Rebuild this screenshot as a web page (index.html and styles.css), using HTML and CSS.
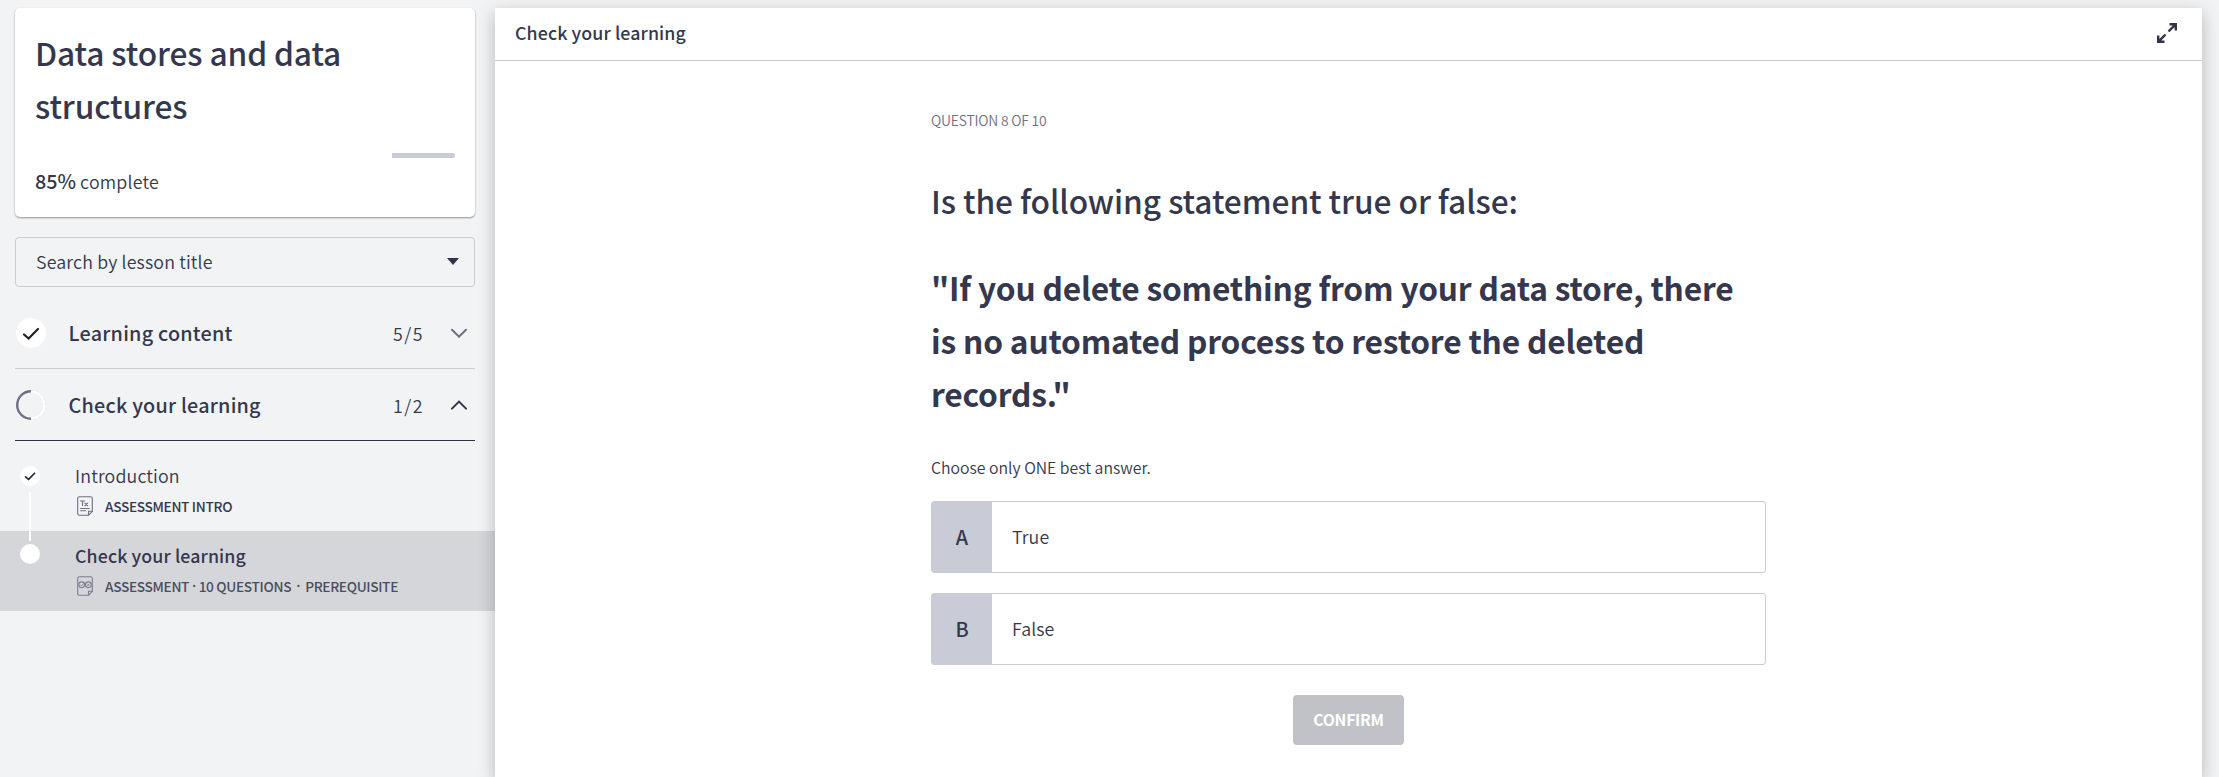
FILE: index.html
```html
<!DOCTYPE html>
<html lang="en">
<head>
<meta charset="utf-8">
<title>Data stores and data structures</title>
<link rel="stylesheet" href="styles.css">
</head>
<body>
<div class="app">
  <aside class="sidebar">
    <section class="course-card">
      <h1 class="course-title">Data stores and data structures</h1>
      <div class="progress"><div class="progress-rest"></div></div>
      <p class="complete"><strong class="percent">85%</strong> <span class="complete-label">complete</span></p>
    </section>
    <div class="search">
      <span class="search-label">Search by lesson title</span>
      <svg class="caret" width="12" height="7" viewBox="0 0 12 7"><path d="M0 0H12L6 7Z" fill="#313449"/></svg>
    </div>
    <div class="group">
      <svg class="status" width="30" height="30" viewBox="0 0 30 30"><circle cx="15" cy="15" r="15" fill="#fff"/><path d="M8 16.5L12.6 20.6L22 11" fill="none" stroke="#222" stroke-width="2.2" stroke-linecap="round"/></svg>
      <h2 class="group-title">Learning content</h2>
      <span class="count">5/5</span>
      <svg class="chevron" width="16" height="10" viewBox="0 0 16 10"><path d="M1 1.7L8 8.7L15 1.7" fill="none" stroke="#6e7083" stroke-width="2" stroke-linecap="round"/></svg>
    </div>
    <div class="group open">
      <svg class="status" width="30" height="30" viewBox="0 0 30 30"><path d="M15 .5A14.5 14.5 0 0 1 15 29.5" fill="none" stroke="#d9dbe0" stroke-width="1" stroke-dasharray="3 2"/><path d="M15 1.5A13.5 13.5 0 0 1 15 28.5" fill="none" stroke="#fff" stroke-width="2"/><path d="M15 1.2A13.8 13.8 0 0 0 15 28.8" fill="none" stroke="#6e7083" stroke-width="2.4"/></svg>
      <h2 class="group-title">Check your learning</h2>
      <span class="count">1/2</span>
      <svg class="chevron" width="16" height="10" viewBox="0 0 16 10"><path d="M1 8.6L8 1.6L15 8.6" fill="none" stroke="#313449" stroke-width="2" stroke-linecap="round"/></svg>
    </div>
    <ul class="lessons">
      <li class="lesson">
        <svg class="bullet" width="20" height="20" viewBox="0 0 20 20"><circle cx="10" cy="10" r="10" fill="#fff"/><path d="M5.6 10.8L8.6 13.4L14.6 7.2" fill="none" stroke="#222" stroke-width="1.6" stroke-linecap="round"/></svg>
        <div class="lesson-body">
          <h3 class="lesson-title">Introduction</h3>
          <div class="meta">
            <svg class="doc" width="16" height="20" viewBox="0 0 16 20" fill="none" stroke="#6e7083" stroke-width="1.1"><path d="M2.5 .7H13.5Q15.3 .7 15.3 2.5V15.5L11.5 19.3H2.5Q.7 19.3 .7 17.5V2.5Q.7 .7 2.5 .7Z"/><path d="M15.3 15.3H11.5V19.3M3.2 12.5H12.6M3.2 14.8H9M3 5H8M5.5 5V10M7.6 6.8L10.8 10M10.8 6.8L7.6 10"/></svg>
            <span class="meta-text">ASSESSMENT INTRO</span>
          </div>
        </div>
        <span class="connector"></span>
      </li>
      <li class="lesson current">
        <svg class="bullet" width="20" height="20" viewBox="0 0 20 20"><circle cx="10" cy="10" r="10" fill="#fff"/></svg>
        <div class="lesson-body">
          <h3 class="lesson-title">Check your learning</h3>
          <div class="meta">
            <svg class="doc" width="16" height="20" viewBox="0 0 16 20" fill="none" stroke="#7b7d8e" stroke-width="1.1"><path d="M2.5 .7H13.5Q15.3 .7 15.3 2.5V15.5L11.5 19.3H2.5Q.7 19.3 .7 17.5V2.5Q.7 .7 2.5 .7Z"/><path d="M15.3 15.3H11.5V19.3"/><circle cx="4.7" cy="8.8" r="2.9"/><circle cx="11.3" cy="8.8" r="2.9"/><path d="M3.3 8.8L4.4 9.9L6.8 7.3M10.2 7.7L12.4 9.9M12.4 7.7L10.2 9.9" stroke-width=".9"/></svg>
            <span class="meta-text"><span>ASSESSMENT</span><span class="dot">·</span><span>10 QUESTIONS</span><span class="dot wide">·</span><span>PREREQUISITE</span></span>
          </div>
        </div>
      </li>
    </ul>
  </aside>
  <main class="panel">
    <header class="panel-header">
      <span class="panel-title">Check your learning</span>
      <svg class="expand" width="20" height="20" viewBox="0 0 20 20" fill="none" stroke="#313449" stroke-width="2.4"><path d="M12.5 1.2H18.8V7.5M18.8 1.2L11.5 8.5M7.5 18.8H1.2V12.5M1.2 18.8L8.5 11.5"/></svg>
    </header>
    <div class="quiz">
      <p class="step">QUESTION 8 OF 10</p>
      <p class="question">Is the following statement true or false:</p>
      <p class="statement">"If you delete something from your data store, there<br>is no automated process to restore the deleted<br>records."</p>
      <p class="hint">Choose only ONE best answer.</p>
      <div class="option"><span class="key">A</span><span class="answer">True</span></div>
      <div class="option"><span class="key">B</span><span class="answer">False</span></div>
      <button class="confirm" disabled>CONFIRM</button>
    </div>
  </main>
</div>
</body>
</html>
```

FILE: styles.css
```css
* { box-sizing: border-box; }
body {
  margin: 0;
  background: #f1f3f5;
  color: #35384c;
  font-family: "Noto Sans CJK SC", "Noto Sans", sans-serif;
  font-weight: 350;
}
h1, h2, h3, p, ul { margin: 0; padding: 0; font-weight: 500; }
ul { list-style: none; }
svg { flex: none; display: block; }

.app {
  display: flex;
  width: 2219px;
  height: 777px;
  padding: 8px 17px 0 0;
  overflow: hidden;
}

.sidebar { width: 495px; flex: none; }
.course-card {
  width: 460px;
  height: 209px;
  margin-left: 15px;
  padding: 18px 20px 0;
  background: #fff;
  border-radius: 5px;
  box-shadow: 0 1px 2px rgba(0, 0, 0, .4);
}
.course-title { font-size: 31.7px; line-height: 52.8px; letter-spacing: -.12px; }
.progress {
  display: flex;
  justify-content: flex-end;
  height: 5px;
  margin-top: 21.4px;
}
.progress-rest { width: 15%; background: #c9cbd6; border-radius: 0 3px 3px 0; }
.complete { margin-top: 8.4px; line-height: 30px; font-size: 17.8px; font-weight: 350; white-space: nowrap; }
.complete-label { letter-spacing: .2px; }
.percent { font-size: 19.8px; font-weight: 500; }

.search {
  display: flex;
  align-items: center;
  justify-content: space-between;
  width: 460px;
  height: 50px;
  margin: 20px 0 10px 15px;
  padding: 0 15px 0 20px;
  border: 1px solid #c9cbd6;
  border-radius: 4px;
}
.caret { margin-bottom: 1px; }
.search-label { padding-bottom: 3px; font-size: 17.8px; line-height: 28px; letter-spacing: .15px; }

.group {
  display: flex;
  align-items: center;
  width: 460px;
  height: 72px;
  margin-left: 15px;
  padding: 0 8px 0 1px;
  border-bottom: 1px solid #c9cbd6;
}
.group.open { border-bottom-color: #313449; }
.group-title { flex: 1; margin-left: 22.6px; font-size: 19.8px; line-height: 30px; letter-spacing: .22px; }
.count { width: 58px; font-size: 17.8px; letter-spacing: 1.5px; }

.lessons { padding-top: 10px; }
.lesson { display: flex; position: relative; height: 80px; padding: 10px 0 0 20px; }
.bullet { margin-top: 5px; }
.current { background: #d5d6da; }
.current .bullet { margin-top: 3px; }
.current .lesson-title { font-weight: 500; letter-spacing: .1px; }
.current .meta-text { color: #4b4d60; }
.connector { position: absolute; z-index: 1; left: 29px; top: 41px; width: 2px; height: 49px; background: #fff; }
.lesson-body { margin-left: 35px; }
.lesson-title { font-size: 17.8px; line-height: 28px; font-weight: 350; letter-spacing: .15px; white-space: nowrap; }
.meta { display: flex; margin: 7px 0 0 2px; white-space: nowrap; }
.meta-text { display: flex; margin-left: 12px; font-size: 13.7px; line-height: 20px; letter-spacing: -.34px; }
.dot { width: 9.5px; text-align: center; font-family: "Noto Sans", sans-serif; font-weight: 600; }
.dot.wide { width: 14px; }

.panel {
  flex: 1;
  position: relative;
  background: #fff;
  box-shadow: 0 5px 16px rgba(0, 0, 0, .25);
}
.panel-header {
  display: flex;
  align-items: center;
  justify-content: space-between;
  height: 53px;
  padding: 0 25px 0 20px;
  border-bottom: 1px solid #c9cbd6;
}
.expand { margin-bottom: 2px; }
.panel-title { padding-bottom: 4px; font-size: 17.8px; line-height: 28px; font-weight: 500; letter-spacing: .1px; }

.quiz { display: flex; flex-direction: column; width: 835px; margin-left: 436px; padding-top: 49px; }
.step { color: #6e7083; font-size: 13.9px; line-height: 20px; font-weight: 350; letter-spacing: -.2px; }
.question { margin-top: 44px; font-size: 31.7px; line-height: 52.8px; letter-spacing: -.07px; white-space: nowrap; }
.statement { margin-top: 34.4px; font-size: 31.7px; line-height: 52.8px; font-weight: 700; letter-spacing: -.17px; white-space: nowrap; }
.hint { margin-top: 36.6px; font-size: 15.8px; line-height: 24px; font-weight: 350; }
.option {
  display: flex;
  height: 72px;
  margin-top: 20px;
  border: 1px solid #c9cbd6;
  border-radius: 3px;
  line-height: 69px;
}
.hint + .option { margin-top: 21px; }
.key { width: 60px; background: #c9cbd6; text-align: center; font-size: 19.8px; font-weight: 500; }
.answer { margin-left: 20px; font-size: 17.8px; letter-spacing: .1px; }
.confirm {
  align-self: center;
  width: 111px;
  height: 50px;
  margin-top: 30px;
  padding: 0;
  border: 0;
  border-radius: 4px;
  background: #c1c2c7;
  color: #fff;
  font: 700 15.8px/50px "Noto Sans CJK SC", sans-serif;
  letter-spacing: -.25px;
}
```
